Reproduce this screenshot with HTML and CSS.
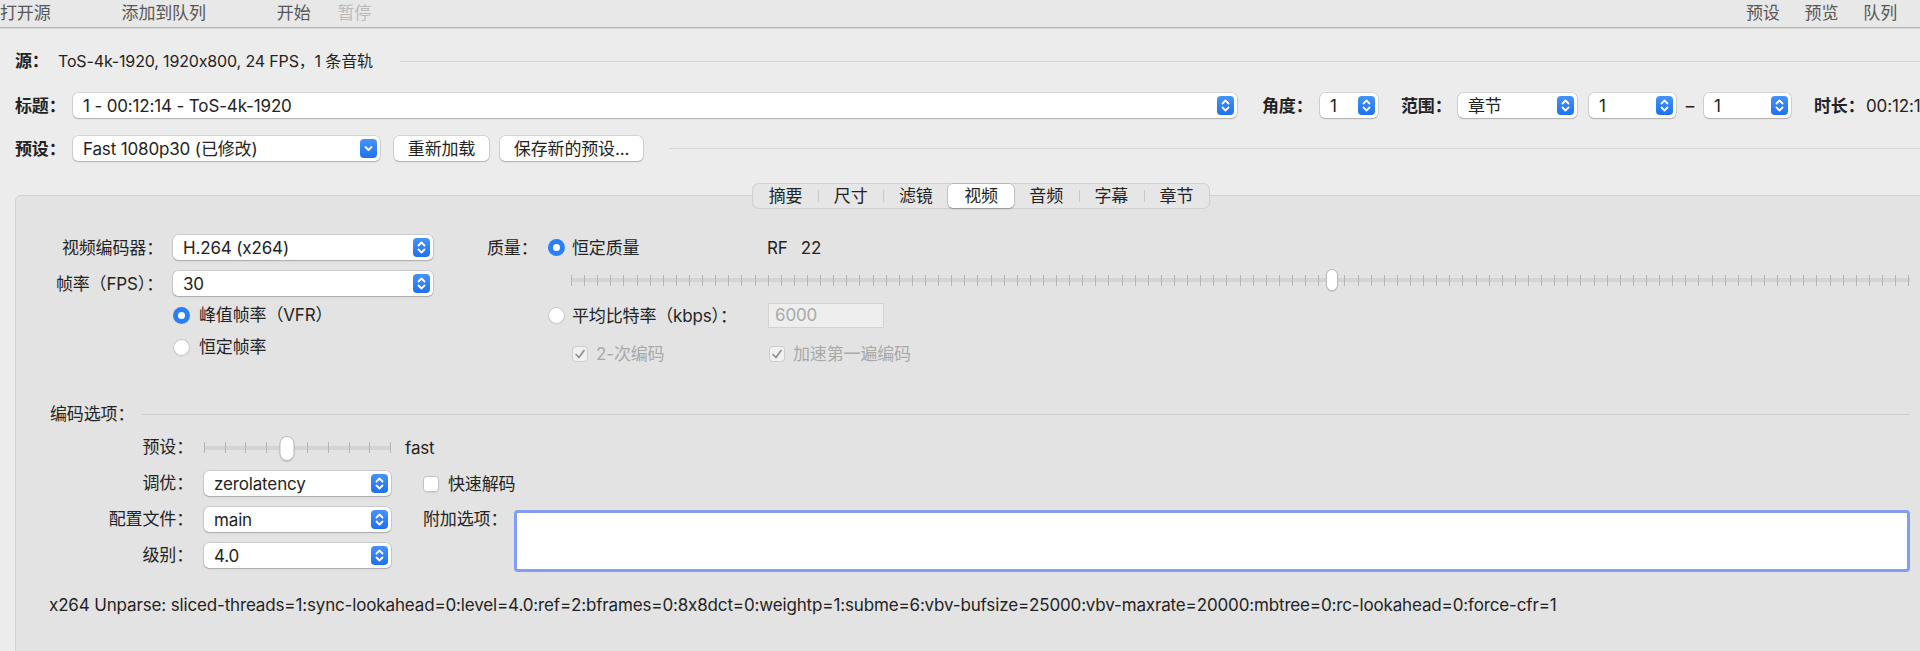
FILE: index.html
```html
<!DOCTYPE html>
<html lang="zh-CN">
<head>
    <meta charset="UTF-8">
    <title>HandBrake</title>
    <link rel="stylesheet" href="styles.css">
</head>
<body>
    <div class="toolbar">
        <div class="toolbar-left">
            <span class="tool">打开源</span>
            <span class="tool tool-add">添加到队列</span>
            <span class="tool tool-start">开始</span>
            <span class="tool tool-pause">暂停</span>
        </div>
        <div class="toolbar-right">
            <span class="tool">预设</span>
            <span class="tool">预览</span>
            <span class="tool">队列</span>
        </div>
    </div>

    <div class="source-row">
        <span class="top-label source-label">源：</span>
        <span class="source-info">ToS-4k-1920, 1920x800, 24 FPS，1 条音轨</span>
        <span class="rule source-rule"></span>
    </div>

    <div class="title-row">
        <span class="top-label">标题：</span>
        <div class="select select-title">
            <span>1 - 00:12:14 - ToS-4k-1920</span>
            <span class="stepper"><svg viewBox="0 0 17 19"><path d="M5.5 7.5 8.5 4.5 11.5 7.5M5.5 11.5 8.5 14.5 11.5 11.5"/></svg></span>
        </div>
        <span class="top-label angle-label">角度：</span>
        <div class="select select-angle">
            <span>1</span>
            <span class="stepper"><svg viewBox="0 0 17 19"><path d="M5.5 7.5 8.5 4.5 11.5 7.5M5.5 11.5 8.5 14.5 11.5 11.5"/></svg></span>
        </div>
        <span class="top-label range-label">范围：</span>
        <div class="select select-range">
            <span>章节</span>
            <span class="stepper"><svg viewBox="0 0 17 19"><path d="M5.5 7.5 8.5 4.5 11.5 7.5M5.5 11.5 8.5 14.5 11.5 11.5"/></svg></span>
        </div>
        <div class="select select-num">
            <span>1</span>
            <span class="stepper"><svg viewBox="0 0 17 19"><path d="M5.5 7.5 8.5 4.5 11.5 7.5M5.5 11.5 8.5 14.5 11.5 11.5"/></svg></span>
        </div>
        <span class="dash">–</span>
        <div class="select select-num select-num-last">
            <span>1</span>
            <span class="stepper"><svg viewBox="0 0 17 19"><path d="M5.5 7.5 8.5 4.5 11.5 7.5M5.5 11.5 8.5 14.5 11.5 11.5"/></svg></span>
        </div>
        <span class="top-label duration-label">时长：</span>
        <span class="duration">00:12:14</span>
    </div>

    <div class="preset-row">
        <span class="top-label">预设：</span>
        <div class="select select-preset">
            <span>Fast 1080p30 (已修改)</span>
            <span class="stepper"><svg viewBox="0 0 17 19"><path d="M5.5 8 8.5 11 11.5 8"/></svg></span>
        </div>
        <span class="button btn-reload">重新加载</span>
        <span class="button btn-save">保存新的预设...</span>
        <span class="rule preset-rule"></span>
    </div>

    <div class="panel">
        <div class="tabs">
            <span class="tab">摘要</span>
            <span class="tab">尺寸</span>
            <span class="tab">滤镜</span>
            <span class="tab active">视频</span>
            <span class="tab">音频</span>
            <span class="tab">字幕</span>
            <span class="tab">章节</span>
        </div>

        <div class="video">
            <div class="video-left">
                <div class="form-row">
                    <span class="label-col">视频编码器：</span>
                    <div class="select select-video">
                        <span>H.264 (x264)</span>
                        <span class="stepper"><svg viewBox="0 0 17 19"><path d="M5.5 7.5 8.5 4.5 11.5 7.5M5.5 11.5 8.5 14.5 11.5 11.5"/></svg></span>
                    </div>
                </div>
                <div class="form-row fps-row">
                    <span class="label-col">帧率（FPS）：</span>
                    <div class="select select-video">
                        <span>30</span>
                        <span class="stepper"><svg viewBox="0 0 17 19"><path d="M5.5 7.5 8.5 4.5 11.5 7.5M5.5 11.5 8.5 14.5 11.5 11.5"/></svg></span>
                    </div>
                </div>
                <div class="form-row radio-row vfr-row">
                    <span class="radio on"></span>
                    <span>峰值帧率（VFR）</span>
                </div>
                <div class="form-row radio-row cfr-row">
                    <span class="radio"></span>
                    <span>恒定帧率</span>
                </div>
            </div>

            <div class="video-right">
                <div class="form-row">
                    <span class="quality-label">质量：</span>
                    <span class="option">
                        <span class="radio on"></span>
                        <span>恒定质量</span>
                    </span>
                    <span class="rf-label">RF</span>
                    <span class="rf-value">22</span>
                </div>
                <div class="form-row slider-row">
                    <div class="slider quality-slider">
                        <div class="ticks" data-count="103"></div>
                        <span class="thumb" style="left: 56.86%"></span>
                    </div>
                </div>
                <div class="form-row bitrate-row">
                    <span class="quality-label"></span>
                    <span class="option option-wide">
                        <span class="radio"></span>
                        <span>平均比特率（kbps）：</span>
                    </span>
                    <span class="text-input disabled">6000</span>
                </div>
                <div class="form-row check-row">
                    <span class="check-option">
                        <span class="checkbox checked disabled"><svg viewBox="0 0 16 16"><path d="M4 8.5 7 11.5 12 4.5"/></svg></span>
                        <span class="muted">2-次编码</span>
                    </span>
                    <span class="check-option">
                        <span class="checkbox checked disabled"><svg viewBox="0 0 16 16"><path d="M4 8.5 7 11.5 12 4.5"/></svg></span>
                        <span class="muted">加速第一遍编码</span>
                    </span>
                </div>
            </div>
        </div>

        <div class="section-head">
            <span>编码选项：</span>
            <span class="rule section-rule"></span>
        </div>

        <div class="options">
            <span class="opt-label">预设：</span>
            <div class="opt-wide">
                <div class="slider speed-slider">
                    <div class="ticks" data-count="10"></div>
                    <span class="thumb thumb-big" style="left: 44.44%"></span>
                </div>
                <span class="speed-value">fast</span>
            </div>

            <span class="opt-label">调优：</span>
            <div class="select select-opt">
                <span>zerolatency</span>
                <span class="stepper"><svg viewBox="0 0 17 19"><path d="M5.5 7.5 8.5 4.5 11.5 7.5M5.5 11.5 8.5 14.5 11.5 11.5"/></svg></span>
            </div>
            <div class="fast-decode">
                <span class="checkbox"></span>
                <span>快速解码</span>
            </div>

            <span class="opt-label">配置文件：</span>
            <div class="select select-opt">
                <span>main</span>
                <span class="stepper"><svg viewBox="0 0 17 19"><path d="M5.5 7.5 8.5 4.5 11.5 7.5M5.5 11.5 8.5 14.5 11.5 11.5"/></svg></span>
            </div>
            <div class="extra">
                <span class="extra-label">附加选项：</span>
                <div class="textarea"></div>
            </div>

            <span class="opt-label">级别：</span>
            <div class="select select-opt">
                <span>4.0</span>
                <span class="stepper"><svg viewBox="0 0 17 19"><path d="M5.5 7.5 8.5 4.5 11.5 7.5M5.5 11.5 8.5 14.5 11.5 11.5"/></svg></span>
            </div>
        </div>

        <div class="unparse">x264 Unparse: sliced-threads=1:sync-lookahead=0:level=4.0:ref=2:bframes=0:8x8dct=0:weightp=1:subme=6:vbv-bufsize=25000:vbv-maxrate=20000:mbtree=0:rc-lookahead=0:force-cfr=1</div>
    </div>

    <script>
        document.querySelectorAll('.ticks').forEach(ticks => {
            const count = Number(ticks.dataset.count);
            for (let i = 0; i < count; i++) {
                const tick = document.createElement('span');
                ticks.appendChild(tick);
            }
        });
    </script>
</body>
</html>
```

FILE: styles.css
```css
* {
    box-sizing: border-box;
}
html, body {
    margin: 0;
    padding: 0;
    height: 100%;
}
body {
    width: 1920px;
    overflow: hidden;
    background-color: #ececec;
    font-family: Inter, "Noto Sans CJK SC", sans-serif;
    font-size: 17px;
    font-feature-settings: "calt" 0;
    letter-spacing: -0.15px;
    line-height: 24px;
    color: #232323;
    white-space: nowrap;
}

/* toolbar */
.toolbar {
    display: flex;
    justify-content: space-between;
    height: 28px;
    line-height: 26px;
    background-color: #e8e8e8;
    border-bottom: 1px solid #b7b7b7;
    box-shadow: 0 1px 0 #d8d8d8;
    color: #575757;
}
.toolbar-left,
.toolbar-right {
    display: flex;
}
.toolbar-right {
    gap: 25px;
    padding-right: 23px;
}
.tool-add {
    margin-left: 71px;
}
.tool-start {
    margin-left: 71px;
}
.tool-pause {
    margin-left: 27px;
    color: #bababa;
}

/* top rows */
.source-row,
.title-row,
.preset-row {
    display: flex;
    align-items: center;
    padding-left: 15px;
}
.source-row {
    height: 24px;
    margin-top: 21px;
}
.title-row {
    height: 25px;
    margin-top: 20px;
}
.preset-row {
    height: 25px;
    margin-top: 18px;
}
.top-label {
    flex-shrink: 0;
    width: 58px;
    font-weight: bold;
}
.source-label {
    width: 43px;
}
.source-info {
    font-size: 16px;
}
.rule {
    flex: 1;
    height: 1px;
    background-color: #d6d6d6;
}
.source-rule {
    margin-left: 27px;
}
.preset-rule {
    margin-left: 26px;
}
.angle-label {
    margin-left: 25px;
}
.range-label {
    margin-left: 23px;
    width: 57px;
}
.duration-label {
    margin-left: 23px;
    width: 52px;
}
.dash {
    width: 28px;
    text-align: center;
    flex-shrink: 0;
}

/* pop-up buttons */
.select {
    flex-shrink: 0;
    display: flex;
    align-items: center;
    justify-content: space-between;
    height: 25px;
    padding: 0 3px 0 10px;
    background-color: #fff;
    border-radius: 5px;
    box-shadow: 0 0 0 0.5px rgba(0, 0, 0, 0.2), 0 1px 1.5px rgba(0, 0, 0, 0.18);
}
.stepper {
    display: flex;
    width: 17px;
    height: 19px;
    border-radius: 4px;
    background: linear-gradient(#4592f8, #1d72f1);
}
.stepper svg {
    width: 17px;
    height: 19px;
    fill: none;
    stroke: #fff;
    stroke-width: 1.8;
    stroke-linecap: round;
    stroke-linejoin: round;
}
.select-title {
    width: 1164px;
}
.select-angle {
    width: 58px;
}
.select-range {
    width: 119px;
}
.select-num {
    width: 87px;
    margin-left: 12px;
}
.select-num-last {
    margin-left: 0;
}
.select-preset {
    width: 307px;
}
.button {
    flex-shrink: 0;
    display: flex;
    align-items: center;
    justify-content: center;
    height: 25px;
    background-color: #fff;
    border-radius: 5px;
    box-shadow: 0 0 0 0.5px rgba(0, 0, 0, 0.2), 0 1px 1.5px rgba(0, 0, 0, 0.18);
}
.btn-reload {
    width: 95px;
    margin-left: 14px;
}
.btn-save {
    width: 143px;
    margin-left: 11px;
}

/* tab panel */
.panel {
    width: 1932px;
    height: 480px;
    margin: 34px 0 0 15px;
    padding-right: 36px;
    background-color: #e3e3e3;
    border: 1px solid #d1d1d1;
    border-radius: 6px;
}
.tabs {
    display: flex;
    width: 456px;
    height: 24px;
    margin: -12px auto 0 737px;
    background-color: #e6e6e6;
    border-radius: 6px;
    box-shadow: 0 0 0 1px #d0d0d0;
}
.tab {
    flex: 1;
    position: relative;
    text-align: center;
    line-height: 24px;
}
.tab + .tab::before {
    content: "";
    position: absolute;
    left: 0;
    top: 6px;
    width: 1px;
    height: 12px;
    background-color: #c8c8c8;
}
.tab.active::before,
.tab.active + .tab::before {
    display: none;
}
.tab.active {
    background-color: #fff;
    border-radius: 5px;
    box-shadow: 0 0 0 0.5px rgba(0, 0, 0, 0.22), 0 1px 2px rgba(0, 0, 0, 0.2);
}

/* video settings */
.video {
    display: flex;
    margin-top: 27px;
}
.video-left {
    width: 471px;
    display: flex;
    flex-direction: column;
}
.video-right {
    flex: 1;
    display: flex;
    flex-direction: column;
}
.form-row {
    display: flex;
    align-items: center;
    height: 25px;
}
.label-col {
    width: 147px;
    margin-right: 10px;
    text-align: right;
}
.select-video {
    width: 260px;
}
.fps-row {
    margin-top: 11px;
}
.radio-row {
    height: 24px;
    padding-left: 157px;
}
.vfr-row {
    margin-top: 7px;
}
.cfr-row {
    margin-top: 8px;
}
.radio {
    flex-shrink: 0;
    display: flex;
    align-items: center;
    justify-content: center;
    width: 17px;
    height: 17px;
    margin-right: 9px;
    border-radius: 50%;
    background-color: #fff;
    box-shadow: inset 0 0 0 1px #c6c6c6, 0 0.5px 1px rgba(0, 0, 0, 0.1);
}
.radio.on {
    background-color: #2a7ff5;
    box-shadow: none;
}
.radio.on::after {
    content: "";
    width: 7px;
    height: 7px;
    border-radius: 50%;
    background-color: #fff;
}
.quality-label {
    width: 61px;
    flex-shrink: 0;
}
.option {
    display: flex;
    align-items: center;
    width: 219px;
}
.option .radio {
    margin-right: 7px;
}
.option-wide {
    width: 220px;
}
.rf-value {
    margin-left: 13px;
}
.slider-row {
    height: 24px;
    margin-top: 8px;
    padding-left: 84px;
}
.bitrate-row {
    margin-top: 11px;
}
.check-row {
    height: 24px;
    margin-top: 14px;
    padding-left: 85px;
}
.check-option {
    display: flex;
    align-items: center;
    width: 197px;
}
.text-input {
    width: 116px;
    height: 25px;
    padding-left: 6px;
    line-height: 23px;
    background-color: #eeeeee;
    border: 1px solid #d2d2d2;
}
.text-input.disabled,
.muted {
    color: #a9a9a9;
}
.checkbox {
    flex-shrink: 0;
    display: flex;
    width: 16px;
    height: 16px;
    margin-right: 8px;
    border-radius: 4px;
    background-color: #fff;
    box-shadow: inset 0 0 0 1px #c4c4c4, 0 0.5px 1px rgba(0, 0, 0, 0.08);
}
.checkbox.disabled {
    background-color: #f1f1f1;
    box-shadow: inset 0 0 0 1px #cdcdcd;
}
.checkbox svg {
    width: 16px;
    height: 16px;
    fill: none;
    stroke: #8f8f8f;
    stroke-width: 1.7;
    stroke-linecap: round;
    stroke-linejoin: round;
}

/* sliders */
.slider {
    position: relative;
    display: flex;
    align-items: center;
    height: 24px;
}
.quality-slider {
    flex: 1;
}
.ticks {
    flex: 1;
    display: flex;
    justify-content: space-between;
    height: 11px;
    background: linear-gradient(#d4d4d4, #d4d4d4) center / 100% 4px no-repeat;
}
.ticks span {
    width: 1px;
    background-color: #b4b4b4;
}
.thumb {
    position: absolute;
    top: 1px;
    width: 12px;
    height: 22px;
    transform: translateX(-50%);
    background-color: #fff;
    border: 1px solid #b9b9b9;
    border-radius: 6px;
    box-shadow: 0 1px 1px rgba(0, 0, 0, 0.12);
}
.thumb-big {
    top: 0;
    width: 15px;
    height: 25px;
    border-radius: 8px;
}

/* encoder options */
.section-head {
    display: flex;
    align-items: center;
    height: 24px;
    margin-top: 36px;
    padding-left: 34px;
}
.section-rule {
    margin-left: 8px;
    background-color: #cdcdcd;
}
.options {
    display: grid;
    grid-template-columns: 188px 219px 1fr;
    grid-template-rows: 25px 25px 25px 25px;
    row-gap: 11px;
    margin-top: 9px;
}
.opt-label {
    padding-right: 11px;
    text-align: right;
    line-height: 25px;
}
.opt-wide {
    grid-column: 2 / 4;
    display: flex;
    align-items: center;
}
.speed-slider {
    width: 187px;
}
.speed-value {
    margin-left: 14px;
}
.select-opt {
    width: 187px;
}
.fast-decode {
    display: flex;
    align-items: center;
}
.fast-decode .checkbox {
    margin-right: 9px;
}
.extra {
    grid-column: 3;
    grid-row: 3 / 5;
    display: flex;
    align-items: flex-start;
}
.extra-label {
    width: 91px;
    flex-shrink: 0;
    line-height: 25px;
}
.textarea {
    flex: 1;
    height: 62px;
    margin-top: 3px;
    background-color: #fff;
    border: 3px solid #809ff0;
    border-radius: 4px;
}
.unparse {
    margin-top: 25px;
    padding-left: 33px;
    height: 24px;
}
```
